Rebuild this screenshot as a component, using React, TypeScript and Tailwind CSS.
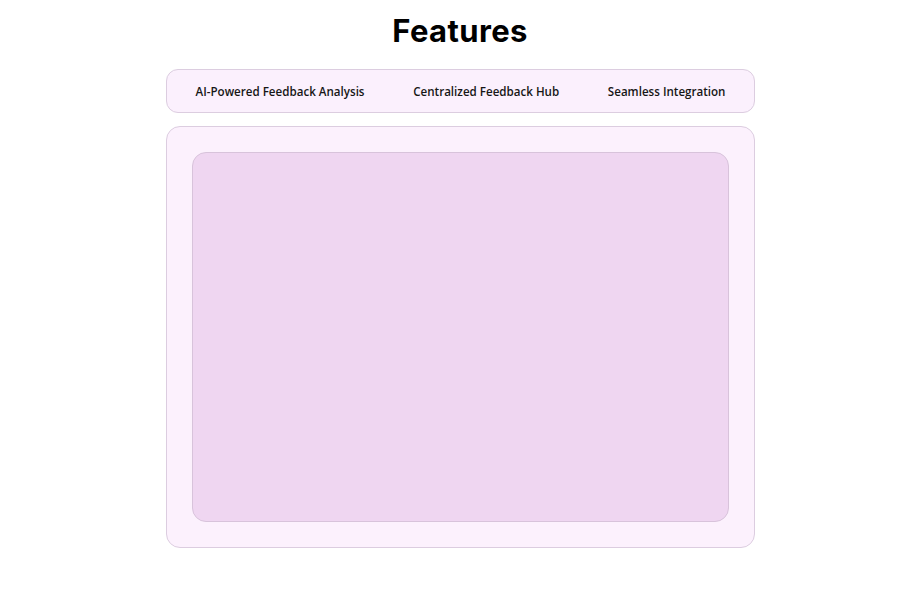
const tabs = ['AI-Powered Feedback Analysis', 'Centralized Feedback Hub', 'Seamless Integration']

const App = () => {
	return (
		<div className="w-full min-h-screen bg-white flex flex-col items-center pt-[12px] pl-[4px]">
			<h1 className="text-[31px] leading-[38px] font-bold text-black tracking-[0.4px] font-['Inter','Lato',sans-serif]">
				Features
			</h1>
			<div className="mt-[19px] w-[589px] h-[44px] rounded-[12px] border border-[#dccde0] bg-[#fbf0fd] flex items-center justify-between pl-[29px] pr-[28px] pt-[1px]">
				{tabs.map((t) => (
					<button
						key={t}
						className="text-[11.6px] font-semibold text-[#161616] font-['Open_Sans',sans-serif]"
					>
						{t}
					</button>
				))}
			</div>
			<div className="mt-[13px] w-[589px] h-[422px] rounded-[14px] border border-[#dccde0] bg-[#fcf1fd] p-[25px]">
				<div className="w-full h-full rounded-[14px] border border-[#d8c3db] bg-[#efd6f1]" />
			</div>
		</div>
	)
}

export default App
